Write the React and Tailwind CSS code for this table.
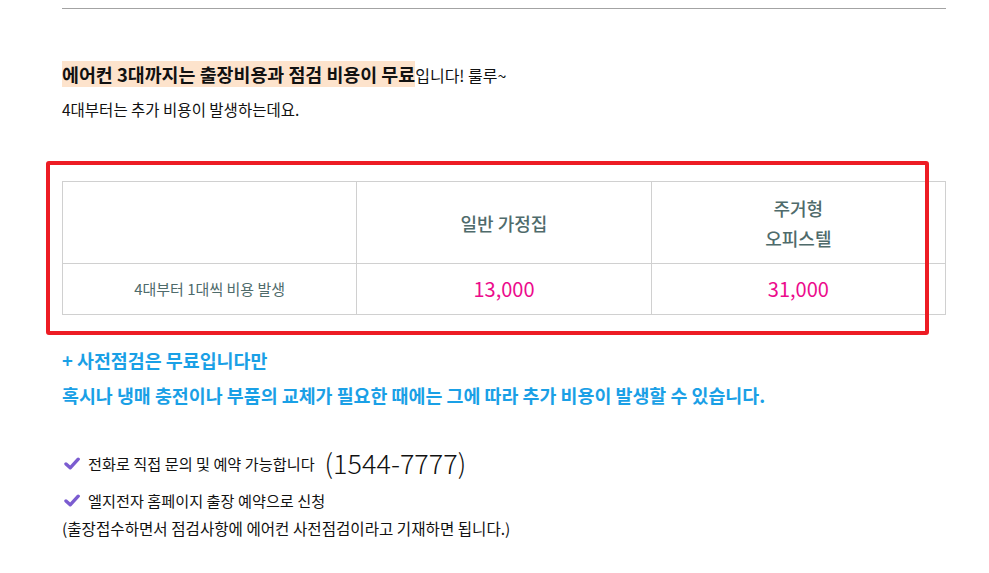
const FONT = { fontFamily: '"Noto Sans CJK KR", "Noto Sans", sans-serif' };

function Check() {
  return (
    <svg width="16" height="13" viewBox="0 0 16 13" className="shrink-0">
      <path d="M2 7 L6.2 10.8 L14.2 2.2" fill="none" stroke="#7b5cd0" strokeWidth="3.4" strokeLinecap="round" strokeLinejoin="round" />
    </svg>
  );
}

export default function App() {
  return (
    <div className="min-h-[573px] bg-white text-[#111]" style={FONT}>
      <div className="ml-[62px] w-[884px] pt-[8px]">
        <div className="border-t border-[#a3a3a3]" />

        <p className="mt-[53px] text-[18.4px] leading-[24px]">
          <span className="bg-[#fde3cc] font-bold">에어컨 3대까지는 출장비용과 점검 비용이 무료</span>
          <span className="text-[16px]">입니다! 룰루~</span>
        </p>
        <p className="mt-[11px] text-[15.5px] leading-[22px]">4대부터는 추가 비용이 발생하는데요.</p>

        <div className="relative mt-[61px]">
          <table className="w-full table-fixed border-collapse text-[#4f6b6b]">
            <tbody>
              <tr className="h-[82px]">
                <td className="border border-[#d0d0d0]" />
                <td className="border border-[#d0d0d0] text-center text-[18px] font-medium leading-[30px]">일반 가정집</td>
                <td className="border border-[#d0d0d0] text-center text-[18px] font-medium leading-[30px]">
                  주거형<br />오피스텔
                </td>
              </tr>
              <tr className="h-[51px]">
                <td className="border border-[#d0d0d0] text-center text-[15px]">4대부터 1대씩 비용 발생</td>
                <td className="border border-[#d0d0d0] text-center text-[20px] text-[#ec0b8c]">13,000</td>
                <td className="border border-[#d0d0d0] text-center text-[20px] text-[#ec0b8c]">31,000</td>
              </tr>
            </tbody>
          </table>
          <div className="pointer-events-none absolute left-[-16px] top-[-20px] h-[174px] w-[883px] rounded-[3px] border-4 border-[#ed1c24]" />
        </div>

        <p className="mt-[30px] text-[18.4px] font-bold leading-[30px] text-[#1aa0e6]">+ 사전점검은 무료입니다만</p>
        <p className="mt-[5px] text-[18.4px] font-bold leading-[30px] text-[#1aa0e6]">
          혹시나 냉매 충전이나 부품의 교체가 필요한 때에는 그에 따라 추가 비용이 발생할 수 있습니다.
        </p>

        <div className="mt-[36px] flex h-[34px] items-center gap-[8px] pl-[2px]">
          <Check />
          <span className="text-[15.2px]">전화로 직접 문의 및 예약 가능합니다</span>
          <span className="ml-[2px] text-[27px] font-light">(1544-7777)</span>
        </div>
        <div className="mt-[5px] flex h-[30px] items-center gap-[8px] pl-[2px]">
          <Check />
          <span className="text-[15.2px]">엘지전자 홈페이지 출장 예약으로 신청</span>
        </div>
        <p className="mt-[1px] text-[15.6px] leading-[24px]">(출장접수하면서 점검사항에 에어컨 사전점검이라고 기재하면 됩니다.)</p>
      </div>
    </div>
  );
}
